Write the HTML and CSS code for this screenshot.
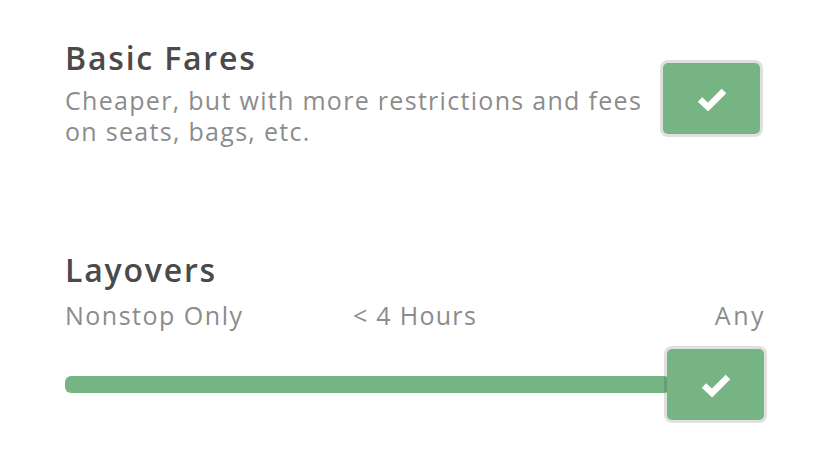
FILE: index.html
```html
<!DOCTYPE html>
<html>
<head>
<meta charset="utf-8">
<link rel="stylesheet" href="styles.css">
</head>
<body>
<div class="page">
  <section class="fares">
    <div class="fares-text">
      <h2 class="title">Basic Fares</h2>
      <p class="desc">Cheaper, but with more restrictions and fees<br>on seats, bags, etc.</p>
    </div>
    <div class="check-box">
      <svg class="check" viewBox="0 0 30 24" width="30" height="24"><polyline points="3,12.5 11,20 27,4" fill="none" stroke="#fff" stroke-width="6.5" stroke-linejoin="miter"/></svg>
    </div>
  </section>
  <section class="layovers">
    <h2 class="title">Layovers</h2>
    <div class="labels">
      <span class="lab-left">Nonstop Only</span>
      <span class="lab-mid">&lt; 4 Hours</span>
      <span class="lab-right">Any</span>
    </div>
    <div class="slider">
      <div class="track"></div>
      <div class="check-box thumb">
        <svg class="check" viewBox="0 0 30 24" width="30" height="24"><polyline points="3,12.5 11,20 27,4" fill="none" stroke="#fff" stroke-width="6.5" stroke-linejoin="miter"/></svg>
      </div>
    </div>
  </section>
</div>
</body>
</html>
```
FILE: styles.css
```css
* { box-sizing: border-box; }
html, body { margin: 0; padding: 0; background: #fff; }
body { font-family: "Open Sans", "Noto Sans", sans-serif; }
.page { width: 828px; height: 460px; padding: 38px 63px 0 65px; }
.title { margin: 0; font-size: 32px; font-weight: 600; color: #4a4a4a; line-height: 40px; letter-spacing: 1.8px; }
.desc { margin: 7px 0 0; font-size: 25px; color: #8c8c8c; line-height: 31px; letter-spacing: 1.3px; }
.fares { display: flex; justify-content: space-between; align-items: flex-start; }
.check-box { width: 103px; height: 77px; background: #76b583; background-clip: padding-box; border: 3px solid rgba(0, 0, 0, 0.12); border-radius: 8px; display: flex; align-items: center; justify-content: center; flex: none; }
.fares .check-box { margin-top: 22px; margin-right: 2px; }
.layovers { margin-top: 103px; }
.labels { display: grid; grid-template-columns: 1fr auto 1fr; font-size: 25px; color: #8c8c8c; line-height: 30px; margin-top: 10px; letter-spacing: 1.5px; }
.lab-mid { letter-spacing: 1.3px; }
.lab-right { text-align: right; margin-right: -1px; letter-spacing: 2.5px; }
.slider { display: flex; align-items: center; margin-top: 16px; }
.track { flex: 1; height: 17px; background: #76b583; border-radius: 6px; margin-right: -6px; }
.thumb { position: relative; margin-right: -2px; }
```
